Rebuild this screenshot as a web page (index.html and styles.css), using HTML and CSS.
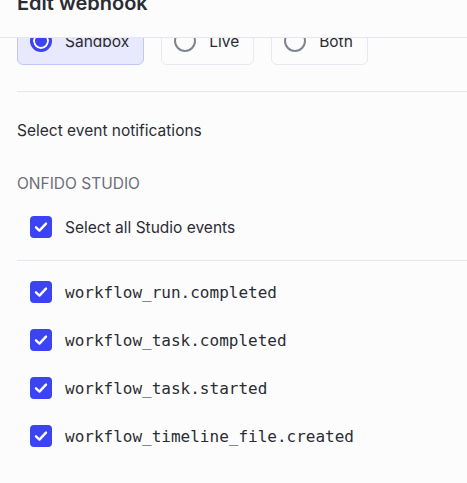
FILE: index.html
```html
<!DOCTYPE html>
<html>
<head>
<meta charset="utf-8">
<link rel="stylesheet" href="styles.css">
</head>
<body>
<div class="modal">
  <header class="modal-header">
    <h1 class="title">Edit webhook</h1>
  </header>
  <div class="modal-body">
    <div class="scroll">
      <div class="env-options">
        <label class="env-card selected">
          <span class="radio on"></span>
          <span class="env-label">Sandbox</span>
        </label>
        <label class="env-card">
          <span class="radio"></span>
          <span class="env-label">Live</span>
        </label>
        <label class="env-card">
          <span class="radio"></span>
          <span class="env-label">Both</span>
        </label>
      </div>
      <hr class="divider first">
      <p class="section-title">Select event notifications</p>
      <p class="group-title">ONFIDO STUDIO</p>
      <div class="check-row all">
        <span class="checkbox"><svg viewBox="0 0 22 22" width="22" height="22"><path d="M6 11.3 L9.4 14.6 L16 7.6" fill="none" stroke="#fff" stroke-width="2.4" stroke-linecap="round" stroke-linejoin="round"/></svg></span>
        <span class="check-label">Select all Studio events</span>
      </div>
      <hr class="divider second">
      <div class="event-list">
        <div class="check-row">
          <span class="checkbox"><svg viewBox="0 0 22 22" width="22" height="22"><path d="M6 11.3 L9.4 14.6 L16 7.6" fill="none" stroke="#fff" stroke-width="2.4" stroke-linecap="round" stroke-linejoin="round"/></svg></span>
          <code class="event">workflow_run.completed</code>
        </div>
        <div class="check-row">
          <span class="checkbox"><svg viewBox="0 0 22 22" width="22" height="22"><path d="M6 11.3 L9.4 14.6 L16 7.6" fill="none" stroke="#fff" stroke-width="2.4" stroke-linecap="round" stroke-linejoin="round"/></svg></span>
          <code class="event">workflow_task.completed</code>
        </div>
        <div class="check-row">
          <span class="checkbox"><svg viewBox="0 0 22 22" width="22" height="22"><path d="M6 11.3 L9.4 14.6 L16 7.6" fill="none" stroke="#fff" stroke-width="2.4" stroke-linecap="round" stroke-linejoin="round"/></svg></span>
          <code class="event">workflow_task.started</code>
        </div>
        <div class="check-row">
          <span class="checkbox"><svg viewBox="0 0 22 22" width="22" height="22"><path d="M6 11.3 L9.4 14.6 L16 7.6" fill="none" stroke="#fff" stroke-width="2.4" stroke-linecap="round" stroke-linejoin="round"/></svg></span>
          <code class="event">workflow_timeline_file.created</code>
        </div>
      </div>
    </div>
  </div>
</div>
</body>
</html>
```
FILE: styles.css
```css
html, body {
  margin: 0;
  padding: 0;
  background: #fcfcfd;
}
body {
  font-family: Inter, "Noto Sans", sans-serif;
  color: #2b2c33;
  width: 467px;
  height: 483px;
  overflow: hidden;
}
.modal {
  display: flex;
  flex-direction: column;
  height: 483px;
}
.modal-header {
  height: 38px;
  border-bottom: 1px solid #e6e6ee;
  overflow: hidden;
  flex: none;
  box-sizing: border-box;
}
.title {
  margin: -9px 0 0 17px;
  font-size: 20px;
  line-height: 24px;
  font-weight: 600;
  color: #2b2c33;
}
.modal-body {
  flex: 1;
  overflow: hidden;
}
.scroll {
  margin-top: -21px;
  padding: 0 0 0 17px;
}
.env-options {
  display: flex;
  gap: 17px;
}
.env-card {
  display: flex;
  align-items: center;
  gap: 13px;
  height: 48px;
  box-sizing: border-box;
  padding: 0 14px 0 12px;
  border: 1px solid #e8e8f0;
  border-radius: 6px;
  background: #fcfcfd;
}
.env-card.selected {
  background: #e8e9fc;
  border-color: #c2c6f8;
}
.radio {
  width: 22px;
  height: 22px;
  box-sizing: border-box;
  border-radius: 50%;
  border: 2.5px solid #82858f;
  flex: none;
}
.radio.on {
  border: 3px solid #3b43f3;
  background: #3b43f3;
  box-shadow: inset 0 0 0 2px #fff;
}
.env-label {
  font-size: 15.5px;
  color: #2b2c33;
}
.divider {
  border: 0;
  border-top: 1px solid #e6e6ee;
  margin: 0;
}
.divider.first {
  margin-top: 26px;
}
.section-title {
  margin: 29px 0 0;
  font-size: 15.5px;
  line-height: 20px;
}
.group-title {
  margin: 33px 0 0;
  font-size: 15.5px;
  line-height: 20px;
  color: #6c6e78;
}
.check-row {
  display: flex;
  align-items: center;
  gap: 13px;
  height: 48px;
  padding-left: 13px;
}
.check-row.all {
  margin-top: 9px;
}
.divider.second {
  margin-top: 9px;
}
.event-list {
  padding-top: 7px;
}
.checkbox {
  width: 22px;
  height: 22px;
  border-radius: 4px;
  background: #3b43f3;
  display: flex;
  flex: none;
}
.check-label {
  font-size: 15.5px;
}
.event {
  font-family: "DejaVu Sans Mono", monospace;
  font-size: 16px;
  color: #2b2c33;
}
```
